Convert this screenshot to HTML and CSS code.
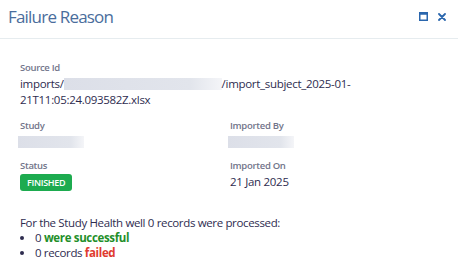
FILE: index.html
```html
<!DOCTYPE html>
<html lang="en">
  <head>
    <meta charset="UTF-8">
    <title>Failure Reason</title>
    <link rel="stylesheet" href="styles.css">
  </head>
  <body>
    <div class="dialog">
      <header class="dialog-head">
        <h1>Failure Reason</h1>
        <div class="tools">
          <button class="tool" aria-label="Maximise">
            <svg width="9" height="9" viewBox="0 0 9 9"><rect x="0.75" y="0.75" width="7.5" height="7.5" fill="none" stroke="currentColor" stroke-width="1.5"/><rect x="0.75" y="0.75" width="7.5" height="2" fill="currentColor"/></svg>
          </button>
          <button class="tool" aria-label="Close">
            <svg width="8" height="8" viewBox="0 0 8 8"><path d="M1 1 7 7M7 1 1 7" stroke="currentColor" stroke-width="1.8" stroke-linecap="round"/></svg>
          </button>
        </div>
      </header>
      <main class="dialog-body">
        <div class="field">
          <div class="label">Source Id</div>
          <div class="value"><span>imports/</span><span class="blur blur-long"></span><span>/import_subject_2025-01-21T11:05:24.093582Z.xlsx</span></div>
        </div>
        <div class="grid">
          <div class="field">
            <div class="label">Study</div>
            <div class="value"><span class="blur blur-short"></span></div>
          </div>
          <div class="field">
            <div class="label">Imported By</div>
            <div class="value"><span class="blur blur-short"></span></div>
          </div>
          <div class="field">
            <div class="label">Status</div>
            <div class="value"><span class="badge">FINISHED</span></div>
          </div>
          <div class="field">
            <div class="label">Imported On</div>
            <div class="value">21 Jan 2025</div>
          </div>
        </div>
        <div class="summary">
          <p>For the Study Health well 0 records were processed:</p>
          <ul>
            <li>0 <b class="ok">were successful</b></li>
            <li>0 records <b class="bad">failed</b></li>
          </ul>
        </div>
      </main>
    </div>
  </body>
</html>
```
FILE: styles.css
```css
:root {
  --font: "Open Sans", "Noto Sans", sans-serif;
  --color-title: #4a6d9c;
  --color-label: #72758a;
  --color-txt: #2e2c4f;
  --color-line: #e6ecef;
  --color-ok: #1f8f2a;
  --color-bad: #e03b30;
}

body {
  margin: 0;
  font-family: var(--font);
  background: #fff;
  color: var(--color-txt);
}

.dialog {
  width: 458px;
}

.dialog-head {
  display: flex;
  align-items: center;
  justify-content: space-between;
  height: 39px;
  padding: 0 12px 5px 8px;
  box-sizing: border-box;
  border-bottom: 1px solid var(--color-line);
}

h1 {
  margin: 0;
  font-size: 17px;
  letter-spacing: -0.8px;
  font-weight: 400;
  color: var(--color-title);
}

.tools {
  display: flex;
  gap: 10px;
  align-items: center;
}

.tool {
  border: 0;
  padding: 0;
  background: none;
  color: #2a66ad;
  display: flex;
  cursor: pointer;
}

.dialog-body {
  padding: 22px 20px 0 20px;
}

.label {
  font-size: 9.5px;
  letter-spacing: -0.3px;
  font-weight: 600;
  color: var(--color-label);
  line-height: 13px;
}

.value {
  font-size: 11.5px;
  letter-spacing: -0.3px;
  line-height: 16px;
  margin-top: 2px;
}

.grid {
  display: grid;
  grid-template-columns: 210px 1fr;
  row-gap: 9px;
  margin-top: 11px;
}

.blur {
  display: inline-block;
  height: 12px;
  vertical-align: -2px;
  background: linear-gradient(90deg, #dcdfe8, #e2e5ec 80%, #f4f5f8);
}

.blur-long {
  width: 158px;
}

.blur-short {
  width: 66px;
  margin-left: -2px;
}

.badge {
  display: inline-block;
  background: #1dab4f;
  color: #fff;
  font-size: 9px;
  letter-spacing: -0.3px;
  font-weight: 600;
  line-height: 17px;
  padding: 0 7px;
  border-radius: 3px;
}

.summary {
  font-size: 11.5px;
  letter-spacing: -0.35px;
  line-height: 15px;
  margin-top: 24px;
}

.summary p {
  margin: 0;
}

.summary ul {
  margin: 0;
  padding-left: 15px;
}

.ok {
  color: var(--color-ok);
}

.bad {
  color: var(--color-bad);
}
```
